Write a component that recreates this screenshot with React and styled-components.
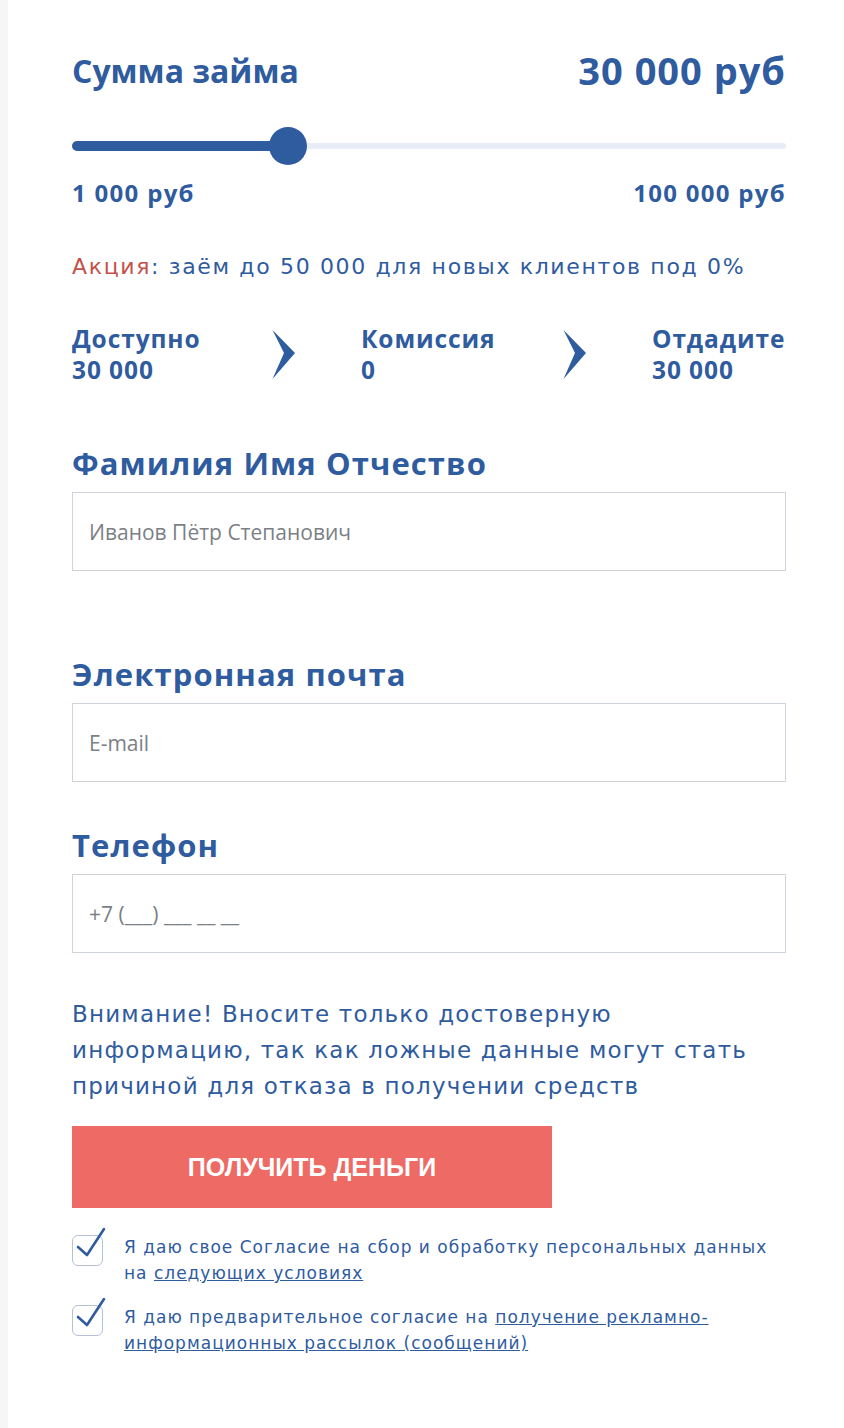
import styled, { createGlobalStyle } from 'styled-components';

const GlobalStyle = createGlobalStyle`
    html, body {
        margin: 0;
        padding: 0;
        background: #f6f6f6;
    }
    * {
        box-sizing: border-box;
    }
`

const blue = '#2f5b9f';

const Page = styled.div`
    margin-left: 8px;
    min-height: 1428px;
    background: #ffffff;
    padding: 44px 58px 40px 64px;
    font-family: "DejaVu Sans", "Open Sans", sans-serif;
    color: ${blue};
`

const Row = styled.div`
    display: flex;
    justify-content: space-between;
    align-items: center;
`

const Title = styled.h2`
    margin: 0;
    font-family: "Open Sans", sans-serif;
    font-size: 32px;
    font-weight: 700;
`

const Amount = styled.div`
    font-family: "Open Sans", sans-serif;
    font-size: 38px;
    font-weight: 700;
    letter-spacing: 1px;
`

const Slider = styled.div`
    position: relative;
    height: 40px;
    margin-top: 30px;
    display: flex;
    align-items: center;
`

const Track = styled.div`
    width: 100%;
    height: 6px;
    border-radius: 3px;
    background: #e8edf5;
    position: relative;
`

const Fill = styled.div`
    height: 10px;
    margin-top: -2px;
    border-radius: 5px;
    background: ${blue};
`

const Thumb = styled.div`
    position: absolute;
    top: 50%;
    width: 38px;
    height: 38px;
    margin: -19px 0 0 -19px;
    border-radius: 50%;
    background: ${blue};
`

const Limits = styled(Row)`
    margin-top: 10px;
    font-family: "Open Sans", sans-serif;
    font-size: 24px;
    font-weight: 700;
    letter-spacing: 1.3px;
`

const Promo = styled.p`
    margin: 45px 0 0;
    font-size: 22px;
    letter-spacing: 1.65px;
    span {
        color: #c4504b;
    }
`

const Stats = styled.div`
    margin-top: 44px;
    display: grid;
    grid-template-columns: 200px 89px 202px 89px auto;
    align-items: center;
    font-family: "Open Sans", sans-serif;
`

const Stat = styled.div`
    font-size: 24.5px;
    font-weight: 700;
    line-height: 31px;
    letter-spacing: 0.9px;
`

const Chevron = styled.svg`
    width: 24px;
    height: 49px;
`

const Field = styled.div`
    margin-top: ${p => p.$gap}px;
`

const Label = styled.label`
    display: block;
    font-family: "Open Sans", sans-serif;
    font-size: 31px;
    font-weight: 700;
    letter-spacing: 1.1px;
    margin-bottom: 8px;
`

const Input = styled.input`
    display: block;
    width: 100%;
    height: 79px;
    border: 1px solid #cfd3df;
    padding: 0 16px;
    font-family: "Open Sans", sans-serif;
    font-size: 21px;
    color: #333;
    outline: none;
    &::placeholder {
        color: #7b7f86;
    }
`

const Warning = styled.p`
    margin: 43px 0 0;
    font-size: 23px;
    line-height: 36px;
    letter-spacing: 1.2px;
    max-width: 690px;
`

const Button = styled.button`
    margin-top: 22px;
    width: 480px;
    height: 82px;
    border: none;
    background: #ed6a65;
    color: #ffffff;
    font-family: "Liberation Sans", Arial, sans-serif;
    font-size: 25px;
    font-weight: 700;
    text-transform: uppercase;
    cursor: pointer;
`

const Consent = styled.div`
    display: flex;
    gap: 21px;
    margin-top: ${p => p.$gap}px;
    font-size: 17px;
    letter-spacing: 1px;
    line-height: 26px;
    a {
        color: ${blue};
        text-decoration: underline;
    }
`

const ConsentText = styled.div`
    max-width: 660px;
`

const Box = styled.div`
    position: relative;
    flex: none;
    width: 31px;
    height: 31px;
    margin-top: 1px;
    border: 1px solid #b5c1d6;
    border-radius: 6px;
    svg {
        position: absolute;
        left: -1px;
        top: -9px;
        width: 36px;
        height: 36px;
    }
`

const ChevronIcon = () => (
    <Chevron viewBox="0 0 24 49">
        <path d="M0.5 0 L23 23 L0.5 49 L12 23 Z" fill={blue} />
    </Chevron>
)

const Check = () => (
    <Box>
        <svg viewBox="0 0 36 36">
            <path d="M6 20 L15 28 L32 2" fill="none" stroke={blue} strokeWidth="2.6" strokeLinecap="round" strokeLinejoin="round" />
        </svg>
    </Box>
)

const App = () => {
    const value = 30000;
    const min = 1000;
    const max = 100000;
    const percent = ((value - min) / (max - min)) * 100 + 0.9;

    return (
        <>
            <GlobalStyle />
            <Page>
                <Row>
                    <Title>Сумма займа</Title>
                    <Amount>30 000 руб</Amount>
                </Row>
                <Slider>
                    <Track>
                        <Fill style={{ width: `${percent}%` }} />
                    </Track>
                    <Thumb style={{ left: `${percent}%` }} />
                </Slider>
                <Limits>
                    <span>1 000 руб</span>
                    <span>100 000 руб</span>
                </Limits>
                <Promo><span>Акция</span>: заём до 50 000 для новых клиентов под 0%</Promo>
                <Stats>
                    <Stat>Доступно<br />30 000</Stat>
                    <ChevronIcon />
                    <Stat>Комиссия<br />0</Stat>
                    <ChevronIcon />
                    <Stat>Отдадите<br />30 000</Stat>
                </Stats>
                <Field $gap={57}>
                    <Label>Фамилия Имя Отчество</Label>
                    <Input placeholder="Иванов Пётр Степанович" />
                </Field>
                <Field $gap={82}>
                    <Label>Электронная почта</Label>
                    <Input placeholder="E-mail" />
                </Field>
                <Field $gap={42}>
                    <Label>Телефон</Label>
                    <Input placeholder="+7 (___) ___ __ __" />
                </Field>
                <Warning>Внимание! Вносите только достоверную информацию, так как ложные данные могут стать причиной для отказа в получении средств</Warning>
                <Button>Получить деньги</Button>
                <Consent $gap={26}>
                    <Check />
                    <ConsentText>Я даю свое Согласие на сбор и обработку персональных данных на <a href="#">следующих условиях</a></ConsentText>
                </Consent>
                <Consent $gap={18}>
                    <Check />
                    <ConsentText>Я даю предварительное согласие на <a href="#">получение рекламно-информационных рассылок (сообщений)</a></ConsentText>
                </Consent>
            </Page>
        </>
    )
}

export default App;
